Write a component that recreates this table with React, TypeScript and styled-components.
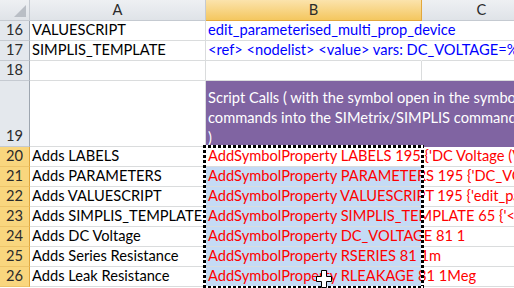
import React from "react";
import styled, { createGlobalStyle } from "styled-components";

const GlobalStyle = createGlobalStyle`
  html, body { margin: 0; padding: 0; background: #fff; }
  body { width: 514px; height: 288px; overflow: hidden; }
`;

const grid = "#DADCDD";
const headBorder = "#C5CAD1";

const Sheet = styled.div`
  position: relative;
  display: grid;
  grid-template-columns: 30px 176px 216px 120px;
  grid-template-rows: 21px 20px 20px 20px 66px repeat(7, 20px);
  width: 514px;
  height: 288px;
  overflow: hidden;
  font-family: Lato, "Liberation Sans", sans-serif;
  font-size: 14.67px;
  line-height: 20px;
  color: #000;
`;

const Corner = styled.div`
  display: flex;
  align-items: flex-end;
  justify-content: flex-end;
  padding: 0 3px 3px 0;
  background: linear-gradient(#eef0f3, #dfe3e8);
  border-right: 1px solid ${headBorder};
  border-bottom: 1px solid ${headBorder};
`;

const ColHeader = styled.div<{ $active?: boolean }>`
  display: flex;
  align-items: center;
  justify-content: center;
  color: #2b2b2b;
  background: ${(p) =>
    p.$active ? "linear-gradient(#fbe3ac, #f4c75f)" : "linear-gradient(#eef0f3, #dfe3e8)"};
  border-right: 1px solid ${(p) => (p.$active ? "#e2a73c" : headBorder)};
  border-bottom: 1px solid ${(p) => (p.$active ? "#e2a73c" : headBorder)};
`;

const RowHeader = styled.div<{ $active?: boolean }>`
  display: flex;
  align-items: flex-end;
  justify-content: center;
  color: #2b2b2b;
  background: ${(p) => (p.$active ? "#f9d67e" : "#e4e8ed")};
  border-right: 1px solid ${(p) => (p.$active ? "#e2a73c" : "#9ea6b0")};
  border-bottom: 1px solid ${(p) => (p.$active ? "#edc46a" : headBorder)};
`;

type Fill = "white" | "select" | "purple" | "none";

const fills: Record<Fill, string> = {
  white: "#fff",
  select: "#c4dbf5",
  purple: "#8064a2",
  none: "transparent",
};

const Cell = styled.div<{ $fill?: Fill; $color?: string; $spill?: boolean; $span?: number }>`
  display: flex;
  align-items: flex-end;
  padding-left: 2px;
  white-space: nowrap;
  overflow: visible;
  min-width: 0;
  grid-column: ${(p) => (p.$span ? `span ${p.$span}` : "auto")};
  background: ${(p) => fills[p.$fill ?? "white"]};
  color: ${(p) => p.$color ?? "#000"};
  border-right: 1px solid ${(p) => (p.$spill || p.$fill === "purple" ? "transparent" : grid)};
  border-bottom: 1px solid ${(p) => (p.$fill === "purple" ? "transparent" : grid)};
`;

const PurpleText = styled.div`
  display: flex;
  flex-direction: column;
  color: #fff;
  margin-bottom: -2px;
`;

const Ants = styled.div`
  position: absolute;
  left: 203px;
  top: 145px;
  width: 221px;
  height: 144px;
  pointer-events: none;
  background:
    repeating-linear-gradient(90deg, #000 0 3px, #fff 3px 5px) top left / 100% 3px no-repeat,
    repeating-linear-gradient(90deg, #000 0 3px, #fff 3px 5px) bottom left / 100% 3px no-repeat,
    repeating-linear-gradient(180deg, #000 0 3px, #fff 3px 5px) top left / 3px 100% no-repeat,
    repeating-linear-gradient(180deg, #000 0 3px, #fff 3px 5px) top right / 3px 100% no-repeat;
`;

const Cursor = styled.svg`
  position: absolute;
  left: 316px;
  top: 270px;
  pointer-events: none;
`;

const rows = [
  { n: 20, a: "Adds LABELS", b: "AddSymbolProperty LABELS 195 {'DC Voltage (V)', 'Series Resistance', 'Leak Resistance'}" },
  { n: 21, a: "Adds PARAMETERS", b: "AddSymbolProperty PARAMETERS 195 {'DC_VOLTAGE', 'RSERIES', 'RLEAKAGE'}" },
  { n: 22, a: "Adds VALUESCRIPT", b: "AddSymbolProperty VALUESCRIPT 195 {'edit_parameterised_multi_prop_device'}" },
  { n: 23, a: "Adds SIMPLIS_TEMPLATE", b: "AddSymbolProperty SIMPLIS_TEMPLATE 65 {'<ref> <nodelist> <value>'}" },
  { n: 24, a: "Adds DC Voltage", b: "AddSymbolProperty DC_VOLTAGE 81 1" },
  { n: 25, a: "Adds Series Resistance", b: "AddSymbolProperty RSERIES 81 1m" },
  { n: 26, a: "Adds Leak Resistance", b: "AddSymbolProperty RLEAKAGE 81 1Meg" },
];

export default function App() {
  return (
    <>
      <GlobalStyle />
      <Sheet>
        <Corner>
          <svg width="12" height="12" viewBox="0 0 12 12">
            <polygon points="12,0 12,12 0,12" fill="#b9bec5" />
          </svg>
        </Corner>
        <ColHeader>A</ColHeader>
        <ColHeader $active>B</ColHeader>
        <ColHeader>C</ColHeader>

        <RowHeader>16</RowHeader>
        <Cell>VALUESCRIPT</Cell>
        <Cell $color="#0000ff" $spill>edit_parameterised_multi_prop_device</Cell>
        <Cell $fill="none" />

        <RowHeader>17</RowHeader>
        <Cell>SIMPLIS_TEMPLATE</Cell>
        <Cell $color="#0000ff" $spill>
          {"<ref> <nodelist> <value> vars: DC_VOLTAGE=%DC_VOLTAGE% RSERIES=%RSERIES%"}
        </Cell>
        <Cell $fill="none" />

        <RowHeader>18</RowHeader>
        <Cell />
        <Cell />
        <Cell />

        <RowHeader>19</RowHeader>
        <Cell />
        <Cell $fill="purple" $span={2}>
          <PurpleText>
            <span>Script Calls ( with the symbol open in the symbol editor, paste these</span>
            <span>commands into the SIMetrix/SIMPLIS command shell</span>
            <span>)</span>
          </PurpleText>
        </Cell>

        {rows.map((r) => (
          <React.Fragment key={r.n}>
            <RowHeader $active>{r.n}</RowHeader>
            <Cell>{r.a}</Cell>
            <Cell $fill={r.n === 20 ? "white" : "select"} $color="#ff0000" $spill>
              {r.b}
            </Cell>
            <Cell $fill="none" />
          </React.Fragment>
        ))}

        <Ants />
        <Cursor width="16" height="18" viewBox="0 0 16 18">
          <polygon
            points="5.5,0.5 10.5,0.5 10.5,6.5 15.5,6.5 15.5,11.5 10.5,11.5 10.5,17.5 5.5,17.5 5.5,11.5 0.5,11.5 0.5,6.5 5.5,6.5"
            fill="#fff"
            stroke="#000"
          />
        </Cursor>
      </Sheet>
    </>
  );
}
